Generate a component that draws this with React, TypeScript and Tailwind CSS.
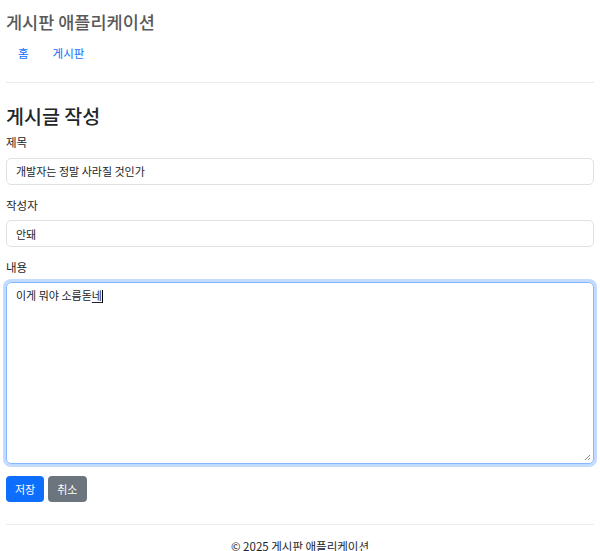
import React from "react";

export default function App() {
  return (
    <div
      className="min-h-[551px] bg-white px-[6px] text-[#212529]"
      style={{ fontFamily: '"Noto Sans CJK KR", "Noto Sans", sans-serif' }}
    >
      {/* Header */}
      <header className="pt-[9px]">
        <h1 className="text-[17.5px] leading-[26px] font-medium text-[#595959]">게시판 애플리케이션</h1>
        <nav className="mt-[3px] flex text-[11.5px] leading-[18px] text-[#0d6efd]">
          <a className="px-[12px] py-[6px]">홈</a>
          <a className="px-[12px] py-[6px]">게시판</a>
        </nav>
      </header>
      <hr className="mt-[14px] border-t border-[#e9ecef]" />

      {/* Form */}
      <main className="pt-[19px]">
        <h2 className="text-[19.5px] leading-[28px] font-medium">게시글 작성</h2>
        <form className="mt-[3px]">
          <div>
            <label className="block text-[11.5px] leading-[18px] mb-[6px]">제목</label>
            <input
              type="text"
              defaultValue="개발자는 정말 사라질 것인가"
              className="w-full h-[27px] rounded-[5px] border border-[#dee2e6] px-[9px] text-[11px] text-[#212529] outline-none"
            />
          </div>
          <div className="mt-[11px]">
            <label className="block text-[11.5px] leading-[18px] mb-[6px]">작성자</label>
            <input
              type="text"
              defaultValue="안돼"
              className="w-full h-[27px] rounded-[5px] border border-[#dee2e6] px-[9px] text-[11px] text-[#212529] outline-none"
            />
          </div>
          <div className="mt-[11px]">
            <label className="block text-[11.5px] leading-[18px] mb-[6px]">내용</label>
            <div className="relative h-[182px] w-full rounded-[5px] border border-[#86b7fe] shadow-[0_0_0_3px_rgba(13,110,253,0.25)] px-[9px] py-[3px] text-[11px] leading-[18px]">
              <span>이게 뭐야 소름돋</span>
              <span className="underline underline-offset-2">네</span>
              <span className="inline-block w-px h-[13px] bg-black align-middle -mt-[2px]" />
              <svg className="absolute right-[2px] bottom-[2px]" width="8" height="8" viewBox="0 0 8 8">
                <path d="M7 2 L2 7 M7 5 L5 7" stroke="#888" strokeWidth="1" />
              </svg>
            </div>
          </div>
          <div className="mt-[12px] flex gap-[4px]">
            <button type="button" className="h-[26px] px-[9px] rounded-[4px] bg-[#0d6efd] text-white text-[11px]">
              저장
            </button>
            <button type="button" className="h-[26px] px-[9px] rounded-[4px] bg-[#6c757d] text-white text-[11px]">
              취소
            </button>
          </div>
        </form>
      </main>

      {/* Footer */}
      <footer className="mt-[22px] border-t border-[#e9ecef] pt-[12px] text-center text-[11.5px] leading-[18px]">
        © 2025 게시판 애플리케이션
      </footer>
    </div>
  );
}
